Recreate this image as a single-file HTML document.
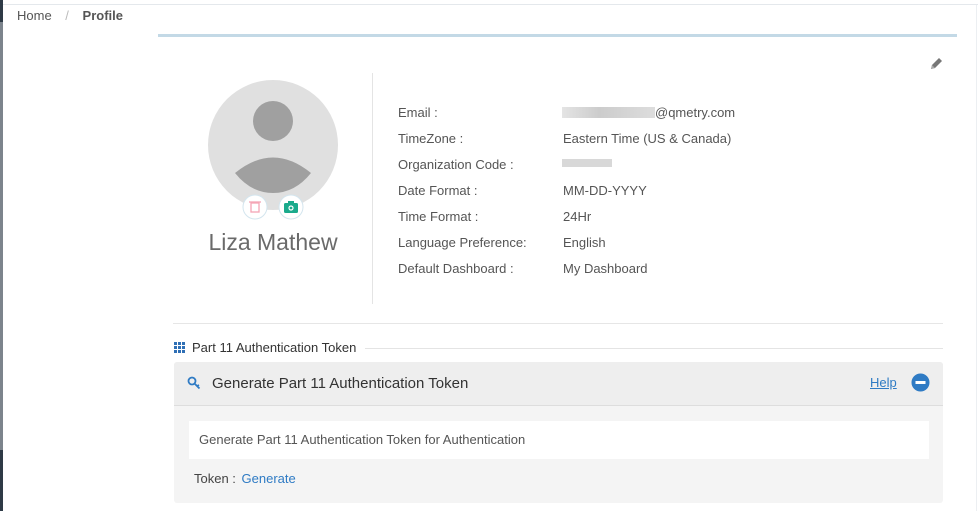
<!DOCTYPE html>
<html><head><style>
body{margin:0;width:978px;height:511px;background:#fff;font-family:"Liberation Sans",sans-serif;position:relative;overflow:hidden;color:#555}
.a{position:absolute}
.lbl{position:absolute;left:398px;font-size:13px;color:#555}
.val{position:absolute;left:563px;font-size:13px;color:#555}
</style></head><body>
<div class="a" style="left:0;top:4px;width:978px;height:1px;background:#e4e8ec"></div>
<div class="a" style="left:0;top:0;width:3px;height:511px;background:#7c848c"></div>
<div class="a" style="left:0;top:0;width:3px;height:22px;background:#2e3a46"></div>
<div class="a" style="left:0;top:450px;width:3px;height:61px;background:#2e3a46"></div>
<div class="a" style="left:976px;top:5px;width:1px;height:506px;background:#eceff2"></div>
<div class="a" style="left:17px;top:8px;font-size:13px;color:#555">Home <span style="color:#bbb;margin:0 10px">/</span> <b style="color:#555">Profile</b></div>
<div class="a" style="left:158px;top:34px;width:799px;height:3px;background:#c3d9e6"></div>
<svg class="a" style="left:928px;top:56px" width="16" height="16" viewBox="0 0 16 16"><path d="M3 13l1-4 7-7 3 3-7 7z" fill="#777"/><path d="M3 13l1-4 3 3z" fill="#aaa"/></svg>
<svg class="a" style="left:200px;top:76px" width="150" height="160">
<circle cx="73" cy="69" r="65" fill="#e0e0e0"/>
<circle cx="73" cy="45" r="20" fill="#a0a0a0"/>
<path d="M35 97 Q73 66 111 97 Q95 117 73 117 Q51 117 35 97z" fill="#a0a0a0"/>
<circle cx="55" cy="131" r="12" fill="#fff" stroke="#d3e5ee"/>
<circle cx="91" cy="131" r="12" fill="#fff" stroke="#d3e5ee"/>
<rect x="51" y="127" width="8" height="9" fill="none" stroke="#f5a5b5" stroke-width="1.3"/>
<line x1="49" y1="126" x2="61" y2="126" stroke="#f5a5b5" stroke-width="1.3"/>
<rect x="84" y="127" width="14" height="10" rx="1.5" fill="#1aaa8c"/>
<rect x="88" y="125" width="6" height="3" fill="#1aaa8c"/>
<circle cx="91" cy="132" r="2.6" fill="#fff"/><circle cx="91" cy="132" r="1.4" fill="#1aaa8c"/>
</svg>
<div class="a" style="left:163px;top:229px;width:220px;text-align:center;font-size:23px;color:#6a6a6a">Liza Mathew</div>
<div class="a" style="left:372px;top:73px;width:1px;height:231px;background:#e4e4e4"></div>
<div class="lbl" style="top:105px">Email :</div>
<div class="lbl" style="top:131px">TimeZone :</div>
<div class="lbl" style="top:157px">Organization Code :</div>
<div class="lbl" style="top:183px">Date Format :</div>
<div class="lbl" style="top:209px">Time Format :</div>
<div class="lbl" style="top:235px">Language Preference:</div>
<div class="lbl" style="top:261px">Default Dashboard :</div>
<div class="a" style="left:562px;top:107px;width:93px;height:11px;background:linear-gradient(90deg,#e4e4e4,#ccc 40%,#ddd)"></div>
<div class="val" style="top:105px;left:655px">@qmetry.com</div>
<div class="val" style="top:131px">Eastern Time (US &amp; Canada)</div>
<div class="a" style="left:562px;top:159px;width:50px;height:8px;background:#d8d8d8"></div>
<div class="val" style="top:183px">MM-DD-YYYY</div>
<div class="val" style="top:209px">24Hr</div>
<div class="val" style="top:235px">English</div>
<div class="val" style="top:261px">My Dashboard</div>
<div class="a" style="left:173px;top:323px;width:770px;height:1px;background:#e6e6e6"></div>
<svg class="a" style="left:174px;top:342px" width="12" height="11"><g fill="#2f6fb5"><rect x="0" y="0" width="3" height="3"/><rect x="4" y="0" width="3" height="3"/><rect x="8" y="0" width="3" height="3"/><rect x="0" y="4" width="3" height="3"/><rect x="4" y="4" width="3" height="3"/><rect x="8" y="4" width="3" height="3"/><rect x="0" y="8" width="3" height="3"/><rect x="4" y="8" width="3" height="3"/><rect x="8" y="8" width="3" height="3"/></g></svg>
<div class="a" style="left:192px;top:340px;font-size:13px;color:#333">Part 11 Authentication Token</div>
<div class="a" style="left:365px;top:348px;width:578px;height:1px;background:#e4e4e4"></div>
<div class="a" style="left:174px;top:362px;width:769px;height:141px;background:#f4f4f4;border-radius:3px"></div>
<div class="a" style="left:174px;top:362px;width:769px;height:43px;background:#eee;border-bottom:1px solid #ddd;border-radius:3px 3px 0 0"></div>
<svg class="a" style="left:187px;top:376px" width="16" height="14"><circle cx="5" cy="5" r="3.5" fill="none" stroke="#2f7bc4" stroke-width="1.8"/><path d="M7.5 7.5l5 5M10 10l2-1" stroke="#2f7bc4" stroke-width="1.8" fill="none"/></svg>
<div class="a" style="left:212px;top:375px;font-size:15px;color:#333">Generate Part 11 Authentication Token</div>
<div class="a" style="left:870px;top:375px;font-size:13px;color:#2f7bc4;text-decoration:underline">Help</div>
<svg class="a" style="left:911px;top:373px" width="19" height="19"><circle cx="9.5" cy="9.5" r="9" fill="#2f7bc4"/><rect x="4.5" y="8" width="10" height="3" fill="#fff"/></svg>
<div class="a" style="left:189px;top:421px;width:740px;height:38px;background:#fff"></div>
<div class="a" style="left:199px;top:432px;font-size:13px;color:#555">Generate Part 11 Authentication Token for Authentication</div>
<div class="a" style="left:194px;top:471px;font-size:13px;color:#444">Token : <span style="color:#2f7bc4;margin-left:2px">Generate</span></div>
</body></html>
